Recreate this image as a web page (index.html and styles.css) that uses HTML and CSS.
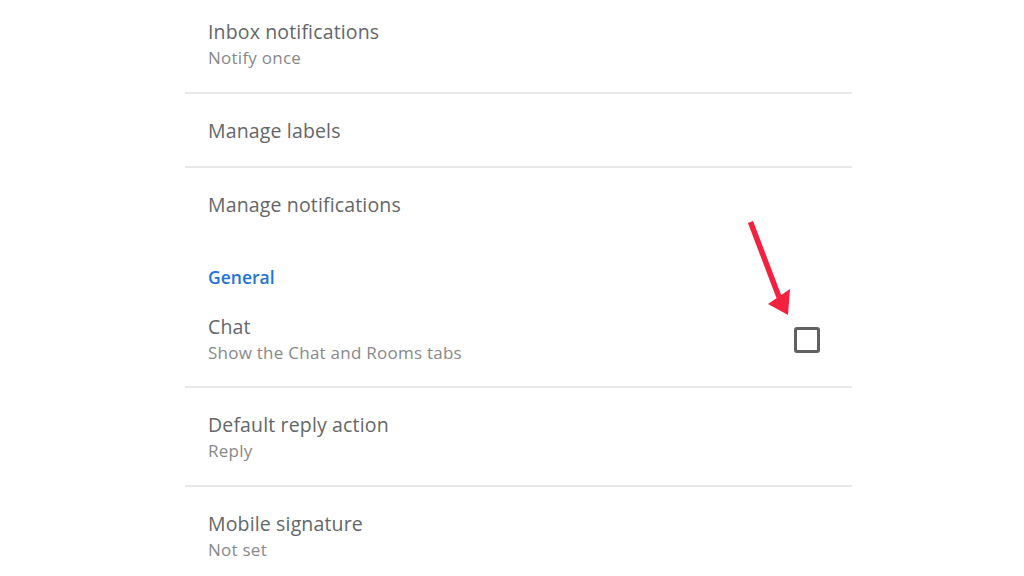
FILE: index.html
```html
<!DOCTYPE html>
<html lang="en">
<head>
<meta charset="utf-8">
<title>Settings</title>
<link rel="stylesheet" href="styles.css">
</head>
<body>
<div class="settings">
  <div class="item">
    <div class="title">Inbox notifications</div>
    <div class="sub">Notify once</div>
  </div>
  <div class="item">
    <div class="title">Manage labels</div>
  </div>
  <div class="item no-border">
    <div class="title">Manage notifications</div>
  </div>
  <div class="section">General</div>
  <div class="item item-check">
    <div class="text">
      <div class="title">Chat</div>
      <div class="sub">Show the Chat and Rooms tabs</div>
    </div>
    <span class="checkbox"></span>
    <svg class="arrow" width="60" height="110" viewBox="0 0 60 110">
      <line x1="10.5" y1="7" x2="39" y2="82" stroke="#f2213f" stroke-width="5.5"/>
      <polygon points="28,89 50,74 48,100" fill="#f2213f"/>
    </svg>
  </div>
  <div class="item">
    <div class="title">Default reply action</div>
    <div class="sub">Reply</div>
  </div>
  <div class="item no-border">
    <div class="title">Mobile signature</div>
    <div class="sub">Not set</div>
  </div>
</div>
</body>
</html>
```
FILE: styles.css
```css
html, body {
  margin: 0;
  padding: 0;
  background: #ffffff;
}
body {
  font-family: "Open Sans", Roboto, sans-serif;
  overflow: hidden;
  height: 576px;
}
.settings {
  width: 667px;
  margin-left: 185px;
  margin-top: -5px;
}
.item {
  position: relative;
  padding: 24px 23px 22px;
  border-bottom: 2px solid #e8e8e8;
}
.item.no-border {
  border-bottom: none;
}
.item-check {
  display: flex;
  align-items: center;
  justify-content: space-between;
  padding-right: 32px;
  padding-bottom: 21px;
}
.title {
  font-size: 19.5px;
  line-height: 26px;
  letter-spacing: 0.15px;
  color: #646668;
}
.sub {
  font-size: 17px;
  line-height: 25px;
  letter-spacing: 0.25px;
  color: #87898b;
}
.section {
  padding: 24px 23px 0;
  font-size: 17.5px;
  line-height: 26px;
  color: #1f74d8;
  font-weight: 600;
}
.checkbox {
  width: 20px;
  height: 20px;
  border: 3px solid #5f6163;
  border-radius: 3px;
}
.arrow {
  position: absolute;
  left: 555px;
  top: -75px;
}
```
